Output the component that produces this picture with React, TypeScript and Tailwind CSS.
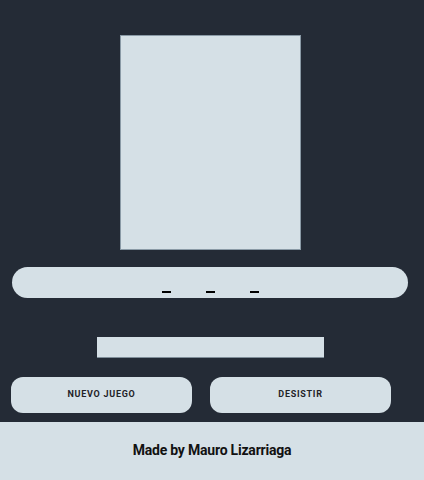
import React from 'react';

const App: React.FC = () => {
  const letters = ['', '', ''];

  return (
    <div className="min-h-[480px] w-full bg-[#242b36] flex flex-col font-['Roboto',sans-serif]">
      <div className="flex flex-col items-center pt-[35px] pr-[3px]">
        <div className="w-[181px] h-[215px] bg-[#d5e0e6] border border-[#8a9aa6]" />
      </div>

      <div className="mt-[17px] pl-[12px] pr-[16px]">
        <div className="h-[31px] rounded-full bg-[#d5e0e6] flex items-end justify-center gap-[35px] pb-[5px]">
          {letters.map((l, i) => (
            <span key={i} className="w-[9px] h-[2px] bg-black">{l}</span>
          ))}
        </div>
      </div>

      <div className="mt-[39px] flex justify-center pr-[3px]">
        <div className="w-[227px] h-[21px] bg-[#d5e0e6] border-b border-[#7f8e99]" />
      </div>

      <div className="mt-[19px] flex gap-[18px] pl-[11px]">
        <button className="w-[181px] h-[36px] rounded-[12px] bg-[#d5e0e6] text-[9px] font-bold tracking-[0.08em] text-[#1f2328]">
          NUEVO JUEGO
        </button>
        <button className="w-[181px] h-[36px] rounded-[12px] bg-[#d5e0e6] text-[9px] font-bold tracking-[0.08em] text-[#1f2328]">
          DESISTIR
        </button>
      </div>

      <footer className="mt-[9px] h-[58px] bg-[#d5e0e6] flex items-center justify-center pb-[2px]">
        <p className="text-[14px] font-bold tracking-[-0.015em] text-[#111]">Made by Mauro Lizarriaga</p>
      </footer>
    </div>
  );
};

export default App;
